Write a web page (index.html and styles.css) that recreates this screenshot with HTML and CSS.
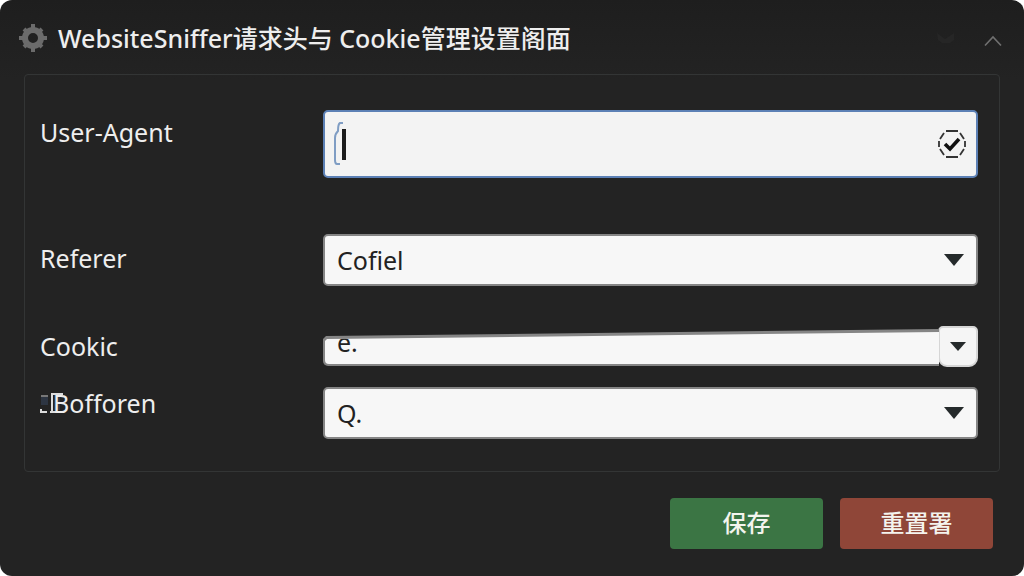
FILE: index.html
```html
<!DOCTYPE html>
<html lang="zh-CN">
	<head>
		<meta charset="utf-8">
		<title>WebsiteSniffer</title>
		<link rel="stylesheet" href="styles.css">
	</head>
	<body>
		<form class="window">
			<header class="titlebar">
				<svg class="gear" viewBox="0 0 28 28">
					<circle cx="14" cy="14" r="8" fill="none" stroke="#6b6b6b" stroke-width="6"/>
					<path d="M14 0v4M14 24v4M0 14h4M24 14h4M5 5l3 3M20 20l3 3M23 5l-3 3M8 20l-3 3" stroke="#6b6b6b" stroke-width="4"/>
				</svg>
				<h1>WebsiteSniffer请求头与 Cookie管理设置阁面</h1>
				<svg class="ghost" viewBox="0 0 20 14">
					<path d="M1 2l8 6 9-6v7l-4 3H6l-4-3z" fill="#262626"/>
				</svg>
				<button class="collapse" type="button" aria-label="Collapse">
					<svg viewBox="0 0 18 12"><path d="M1 10.500l8-8.500 8 8.500" fill="none" stroke="#707070" stroke-width="1.600"/></svg>
				</button>
			</header>

			<section class="panel">
				<div class="row row-agent">
					<label for="agent">User-Agent</label>
					<div class="field field-active">
						<svg class="caret" viewBox="0 0 14 44">
							<path d="M9 1H6Q4 2 4 9Q1 12 1 16V38Q1 42 3 42H6" fill="none" stroke="#7f9dc4" stroke-width="2"/>
							<path d="M10 7v31" stroke="#1c1c1c" stroke-width="4"/>
						</svg>
						<input id="agent" type="text">
						<svg class="check" viewBox="0 0 30 30">
							<path d="M9 2h12M9 28h12M23 4l4 6M28 12v6M27 20l-4 6M7 4l-4 6M2 12v6M3 20l4 6" fill="none" stroke="#333" stroke-width="1.800"/>
							<path d="M8 15l5 5 9-10" fill="none" stroke="#111" stroke-width="3.600"/>
						</svg>
					</div>
				</div>
				<div class="row row-referer">
					<label for="referer">Referer</label>
					<div class="field">
						<select id="referer"><option>Cofiel</option></select>
						<svg class="arrow" viewBox="0 0 20 12"><path d="M0 0h20L10 12z" fill="#252a2b"/></svg>
					</div>
				</div>
				<div class="row row-cookie">
					<label for="cookie">Cookic</label>
					<div class="combo">
						<div class="combo-edge">
							<input id="cookie" type="text" value="e.">
						</div>
						<button class="combo-btn" type="button" aria-label="Open">
							<svg viewBox="0 0 16 9"><path d="M0 0h16L8 9z" fill="#252a2b"/></svg>
						</button>
					</div>
				</div>
				<div class="row row-last">
					<label for="last">
						<svg class="mark" viewBox="0 0 28 24">
							<path d="M1 5h7v8H1zM14 3h6v15h-6z" fill="#2d3542"/>
							<path d="M1 4h7" stroke="#777" stroke-width="2"/>
							<path d="M1 17v3h6M12 20V2h11M18 20H10" fill="none" stroke="#ddd" stroke-width="2"/>
						</svg><span>Bofforen</span>
					</label>
					<div class="field">
						<select id="last"><option>Q.</option></select>
						<svg class="arrow" viewBox="0 0 20 12"><path d="M0 0h20L10 12z" fill="#252a2b"/></svg>
					</div>
				</div>
			</section>

			<footer class="actions">
				<button class="btn save" type="button">保存</button>
				<button class="btn reset" type="reset">重置署</button>
			</footer>
		</form>
	</body>
</html>
```
FILE: styles.css
```css
* {
	margin: 0;
	padding: 0;
	box-sizing: border-box;
}

body {
	background-color: white;
	font-family: "Noto Sans", "Noto Sans CJK SC", sans-serif;
	font-size: 25px;
	color: #eee;
}

input,
select,
button {
	font: inherit;
	border: none;
	outline: none;
}

.window {
	display: flex;
	flex-direction: column;
	min-height: 100vh;
	border-radius: 12px;
	background: linear-gradient(#1e1e1e, #232323 80px);
}

.titlebar {
	display: flex;
	align-items: center;
	height: 74px;
	padding: 2px 22px 0 19px;
}

.titlebar h1 {
	flex: 1;
	margin-left: 11px;
	font-size: 25px;
	font-weight: 500;
	line-height: 36px;
	white-space: nowrap;
}

.gear {
	width: 28px;
	height: 28px;
}

.ghost {
	width: 20px;
	height: 14px;
	margin-right: 28px;
}

.collapse {
	display: flex;
	padding-top: 6px;
	background: none;
	cursor: pointer;
}

.collapse svg {
	width: 18px;
	height: 12px;
}

.panel {
	display: flex;
	flex-direction: column;
	margin: 0 24px;
	padding: 35px 21px 32px 15px;
	border: 1px solid #333535;
	border-radius: 4px;
}

.row {
	display: grid;
	grid-template-columns: 283px 1fr;
}

.row label {
	display: flex;
	line-height: 36px;
}

.row-agent {
	margin-bottom: 56px;
}

.row-agent label {
	padding-top: 4px;
}

.row-referer {
	margin-bottom: 40px;
}

.row-referer label {
	padding-top: 6px;
}

.row-cookie {
	margin-bottom: 20px;
}

.row-cookie label {
	padding-top: 2px;
}

/* 最后一行标签靠上 */
.row-last label {
	align-items: flex-start;
	height: 36px;
	line-height: 32px;
}

.field {
	display: flex;
	align-items: center;
	height: 52px;
	padding-right: 12px;
	border: 2px solid #858585;
	border-radius: 5px;
	background-color: #f7f7f7;
}

.field-active {
	height: 68px;
	padding: 0 9px;
	border-color: #5c80b5;
	background-color: #f3f3f3;
}

.field input,
.field select {
	flex: 1;
	min-width: 0;
	height: 100%;
	background: none;
	color: #222;
}

.field select {
	appearance: none;
	margin-right: -20px;
	padding: 0 12px;
}

.caret {
	width: 14px;
	height: 44px;
}

.check {
	width: 30px;
	height: 30px;
}

.arrow {
	width: 20px;
	height: 12px;
	pointer-events: none;
}

/* 上边框是倾斜的 */
.combo {
	display: flex;
	align-items: flex-end;
	height: 41px;
}

.combo-edge {
	flex: 1;
	height: 37px;
	margin-bottom: 1px;
	padding: 3px 0 2px 2px;
	border-radius: 5px 0 0 5px;
	background-color: #858585;
	clip-path: polygon(0 10px, 3px 7px, 100% 0, 100% 100%, 0 100%);
}

.combo-edge input {
	display: block;
	width: 100%;
	height: 32px;
	padding: 0 12px 12px;
	line-height: 20px;
	border-radius: 4px 0 0 4px;
	background-color: #f7f7f7;
	color: #222;
	clip-path: polygon(0 9px, 2px 7px, 100% 0, 100% 100%, 0 100%);
}

.combo-btn {
	display: flex;
	align-items: center;
	justify-content: center;
	width: 40px;
	height: 41px;
	margin-left: -1px;
	border: 2px solid #d6d6d6;
	border-radius: 5px 5px 9px 9px;
	background-color: #f5f5f5;
}

.combo-btn svg {
	width: 16px;
	height: 9px;
}

.mark {
	width: 28px;
	height: 24px;
	margin: 5px -15px 0 0;
}

.actions {
	display: flex;
	justify-content: flex-end;
	gap: 17px;
	padding: 26px 31px 24px;
}

.btn {
	width: 153px;
	height: 51px;
	padding-bottom: 4px;
	border-radius: 4px;
	font-size: 24px;
	font-weight: 500;
	color: #f4f4ee;
	cursor: pointer;
}

.save {
	background-color: #3b7544;
}

.reset {
	background-color: #8f4638;
}
```
